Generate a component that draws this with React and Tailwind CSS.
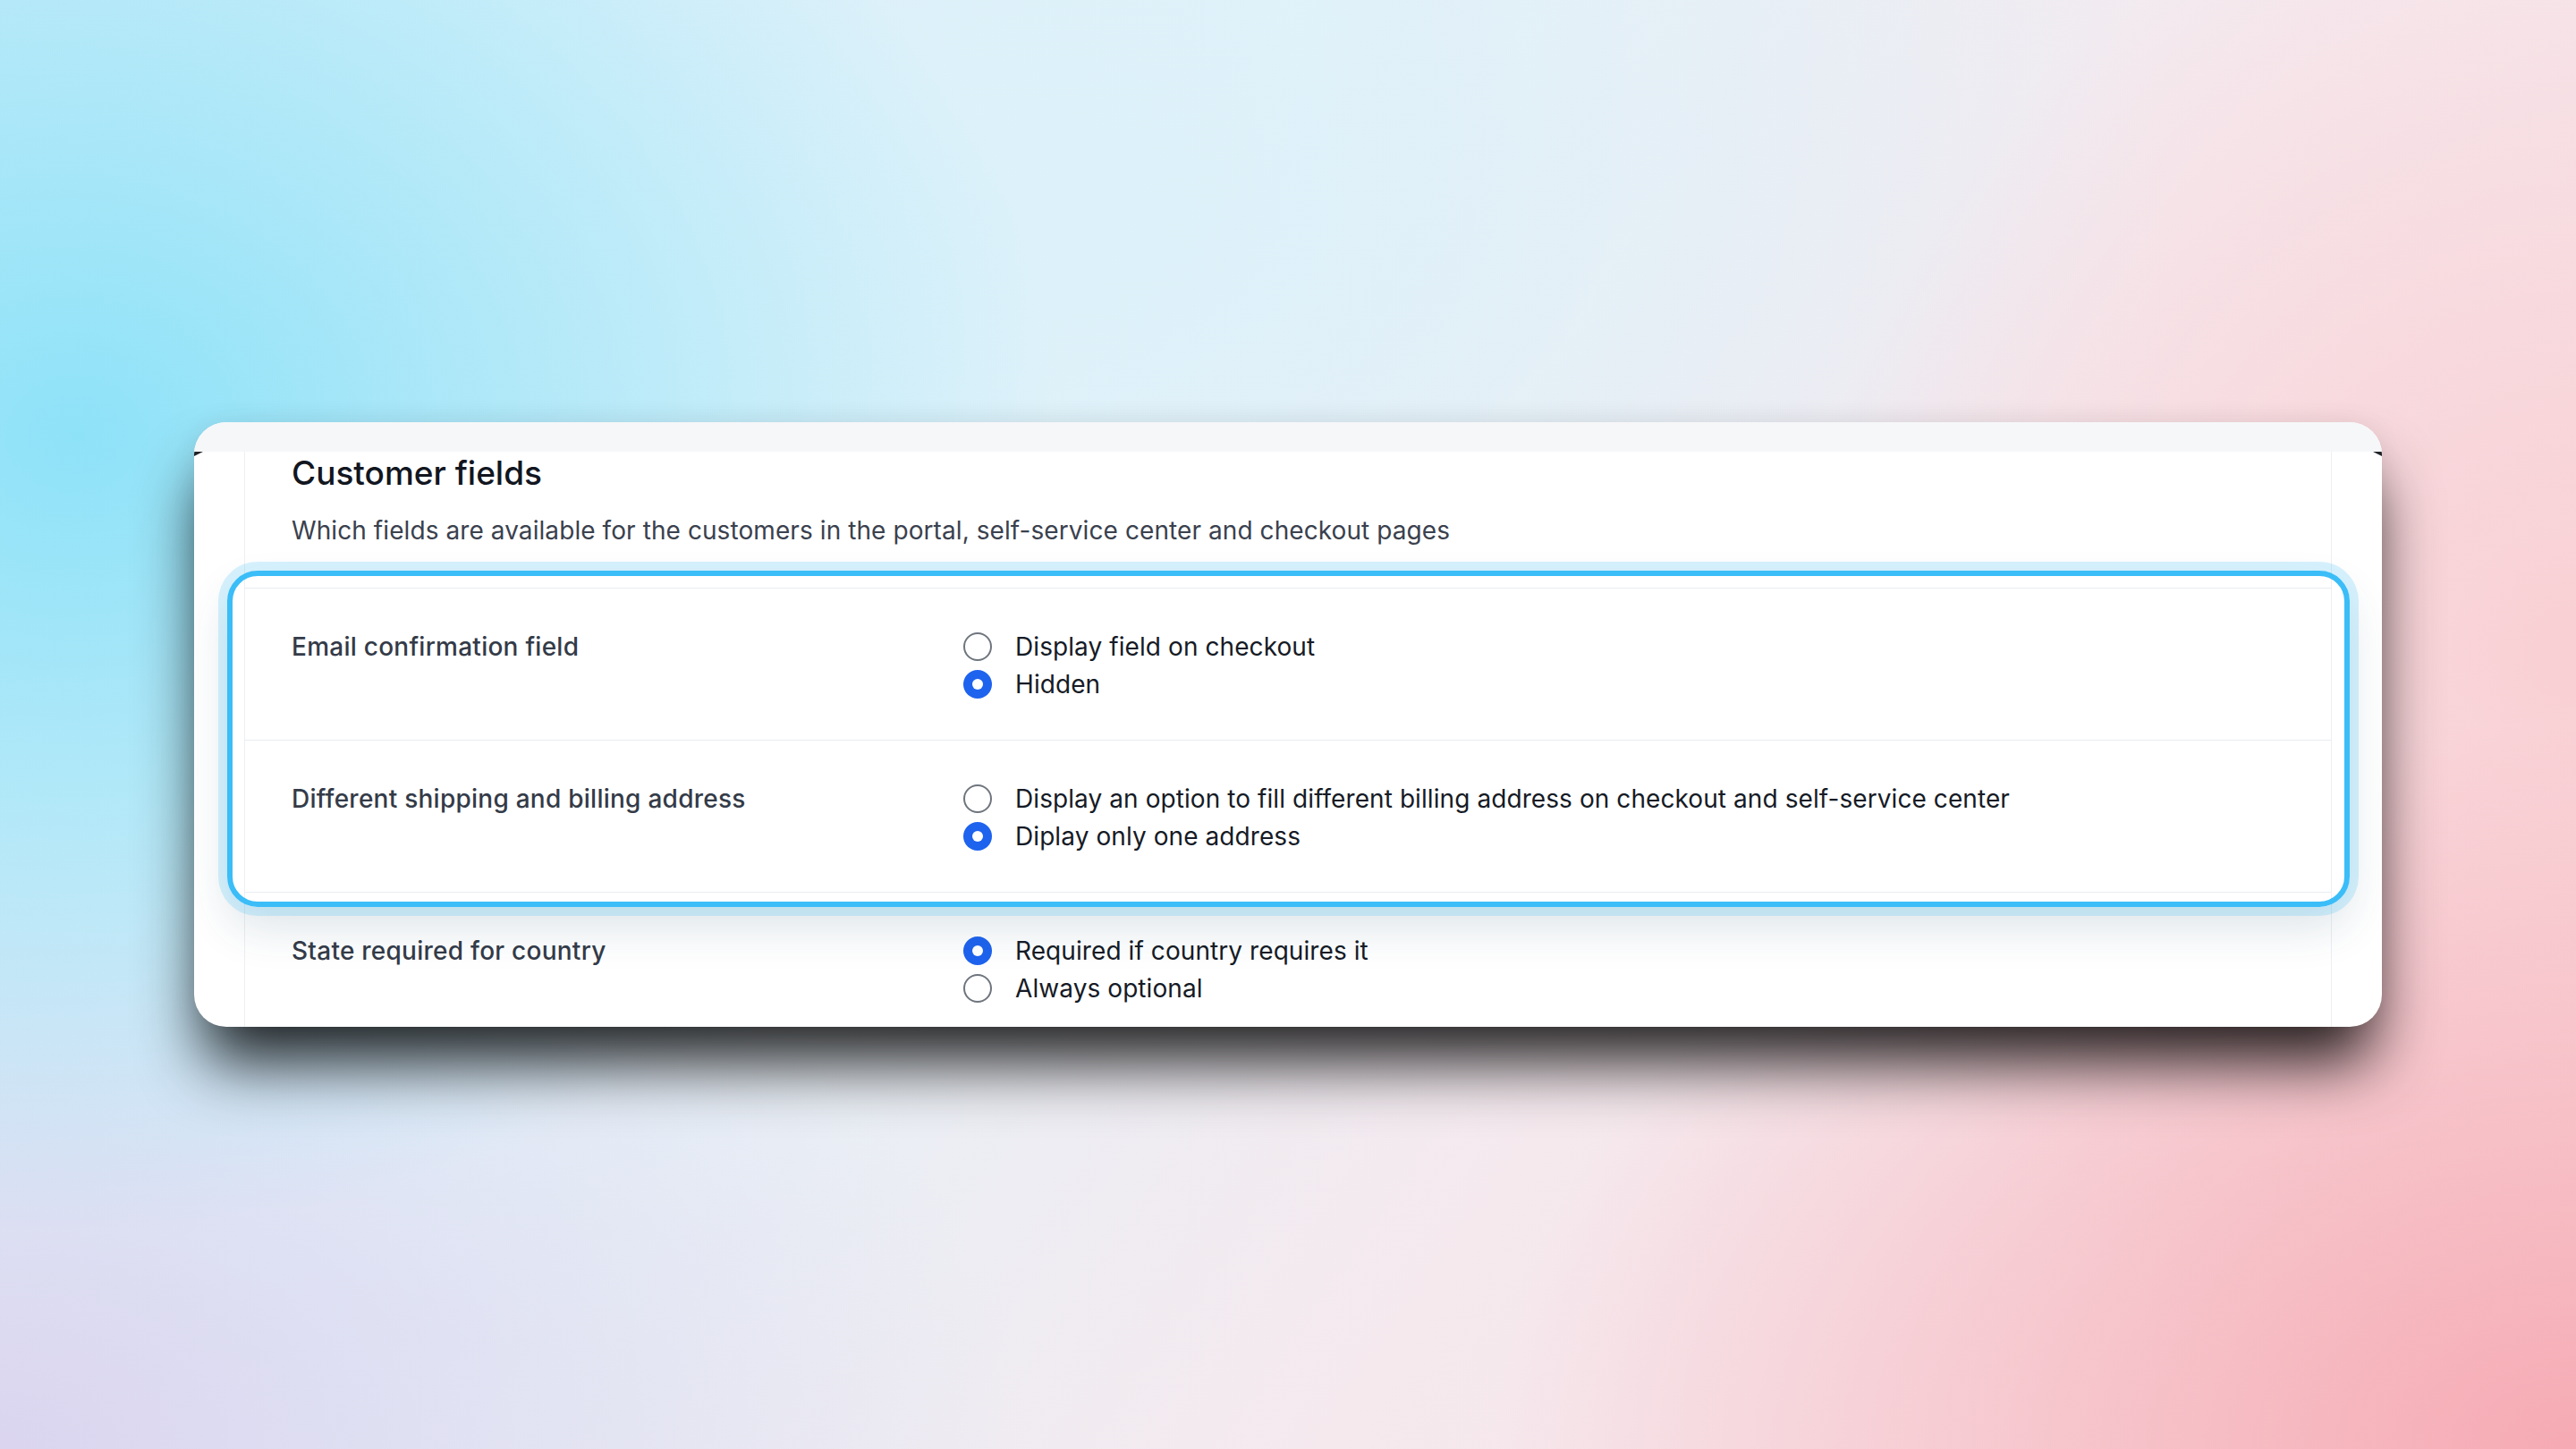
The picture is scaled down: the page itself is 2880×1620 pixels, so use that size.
import React from "react";

function Radio({ checked }) {
  if (checked) {
    return (
      <span className="w-[32px] h-[32px] rounded-full bg-[#1e63ee] flex items-center justify-center shrink-0">
        <span className="w-[12px] h-[12px] rounded-full bg-white" />
      </span>
    );
  }
  return <span className="w-[32px] h-[32px] rounded-full border-2 border-[#6f757e] bg-white shrink-0" />;
}

function Row({ label, options }) {
  return (
    <div className="flex pl-[52px] pt-[44px] pb-[41px] border-b border-[#e9edf2]">
      <div className="w-[751px] shrink-0 text-[28px] leading-[42px] font-medium tracking-[0.25px] text-[#343b48]">{label}</div>
      <div className="flex flex-col">
        {options.map((o) => (
          <div key={o.text} className="flex items-center gap-[26px] h-[42px]">
            <Radio checked={o.checked} />
            <span className="text-[28px] leading-[42px] tracking-[0.08px] text-[#161b26]">{o.text}</span>
          </div>
        ))}
      </div>
    </div>
  );
}

export default function App() {
  return (
    <div className="w-[2880px] h-[1620px] overflow-hidden flex items-center justify-center [font-family:Inter,'Noto_Sans',sans-serif] bg-[radial-gradient(ellipse_38%_55%_at_3%_30%,#8ee2f8_0%,rgba(142,226,248,0)_100%),radial-gradient(ellipse_42%_50%_at_100%_100%,#f6aab3_0%,rgba(246,170,179,0)_100%),radial-gradient(ellipse_30%_55%_at_100%_45%,#f9d0d4_0%,rgba(249,208,212,0)_100%),radial-gradient(ellipse_40%_45%_at_0%_100%,#dbd5ef_0%,rgba(219,213,239,0)_100%),radial-gradient(ellipse_45%_45%_at_40%_15%,#dcf1fa_0%,rgba(220,241,250,0)_100%),linear-gradient(125deg,#d4eef9_0%,#e4f2f9_35%,#f5e9ee_65%,#f8e0e4_100%)]">
      <div className="relative w-[2446px] h-[676px] rounded-[36px] bg-white overflow-hidden flex flex-col shadow-[0_50px_70px_-10px_rgba(0,0,0,0.85),0_0_30px_rgba(0,0,0,0.05)]">
        <div className="h-[33px] shrink-0 bg-[#f6f7f9]" />
        <div className="relative flex-1 px-[56px]">
          <div className="absolute left-0 top-0 w-[10px] h-[5px] bg-[#1f2328] [clip-path:polygon(0_0,100%_0,0_100%)]" />
          <div className="absolute right-0 top-0 w-[10px] h-[5px] bg-[#1f2328] [clip-path:polygon(0_0,100%_0,100%_100%)]" />
          <div className="h-full border-x border-[#eceff3]">
            <div className="pl-[52px] pt-[2px] pb-[43px]">
              <h2 className="text-[37px] leading-[44px] font-medium text-[#12161f]">Customer fields</h2>
              <p className="mt-[21px] text-[28px] leading-[42px] tracking-[0.08px] text-[#3a414e]">
                Which fields are available for the customers in the portal, self-service center and checkout pages
              </p>
            </div>
            <div className="relative border-t border-[#e9edf2]">
              <Row
                label="Email confirmation field"
                options={[
                  { text: "Display field on checkout", checked: false },
                  { text: "Hidden", checked: true },
                ]}
              />
              <Row
                label="Different shipping and billing address"
                options={[
                  { text: "Display an option to fill different billing address on checkout and self-service center", checked: false },
                  { text: "Diplay only one address", checked: true },
                ]}
              />
              <div className="pointer-events-none absolute top-[-20px] bottom-[-16px] left-[-20px] right-[-21px] rounded-[34px] border-[6px] border-[#3bbdf8] shadow-[0_0_0_10px_rgba(56,189,248,0.2),0_24px_50px_rgba(20,70,100,0.14)]" />
            </div>
            <Row
              label="State required for country"
              options={[
                { text: "Required if country requires it", checked: true },
                { text: "Always optional", checked: false },
              ]}
            />
          </div>
        </div>
      </div>
    </div>
  );
}
